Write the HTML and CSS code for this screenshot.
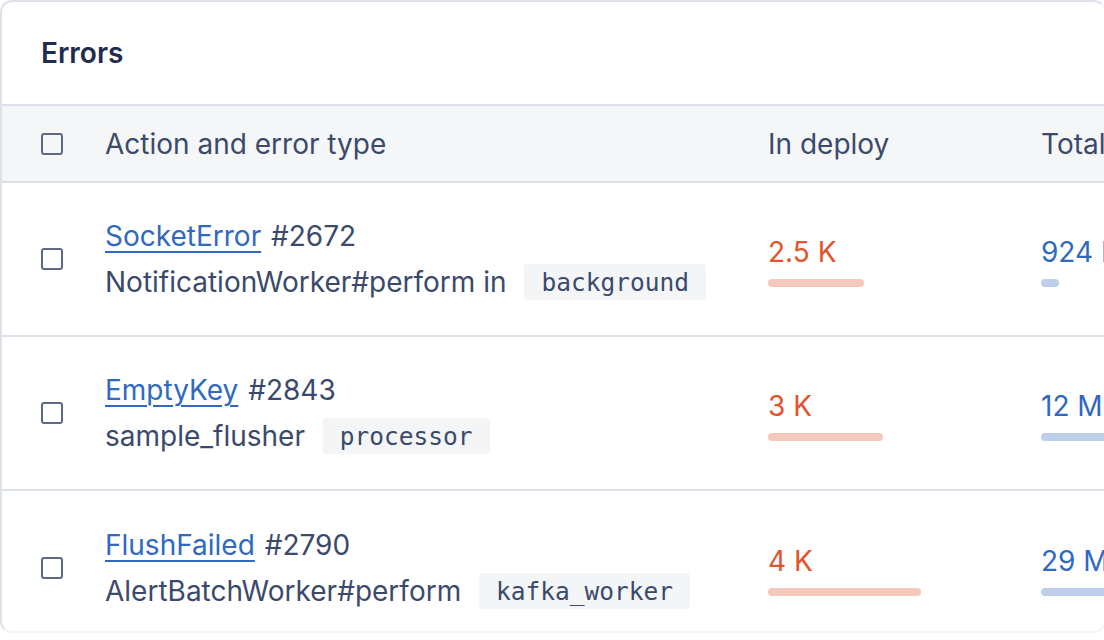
FILE: index.html
```html
<!DOCTYPE html>
<html lang="en">
<head>
<meta charset="utf-8">
<title>Errors</title>
<link rel="stylesheet" href="styles.css">
</head>
<body>
<div class="card">
  <div class="card-title">Errors</div>
  <div class="row head">
    <div class="cell"><span class="check"></span></div>
    <div class="cell">Action and error type</div>
    <div class="cell">In deploy</div>
    <div class="cell">Total</div>
  </div>
  <div class="row">
    <div class="cell"><span class="check"></span></div>
    <div class="cell main">
      <div class="line1"><a class="link" href="#">SocketError</a> #2672</div>
      <div class="line2">NotificationWorker#perform in <span class="tag">background</span></div>
    </div>
    <div class="cell metric deploy">
      <div class="num">2.5 K</div>
      <div class="bar" style="width:96px"></div>
    </div>
    <div class="cell metric total">
      <div class="num">924 K</div>
      <div class="bar" style="width:18px"></div>
    </div>
  </div>
  <div class="row">
    <div class="cell"><span class="check"></span></div>
    <div class="cell main">
      <div class="line1"><a class="link" href="#">EmptyKey</a> #2843</div>
      <div class="line2">sample_flusher <span class="tag">processor</span></div>
    </div>
    <div class="cell metric deploy">
      <div class="num">3 K</div>
      <div class="bar" style="width:115px"></div>
    </div>
    <div class="cell metric total">
      <div class="num">12 M</div>
      <div class="bar" style="width:120px"></div>
    </div>
  </div>
  <div class="row">
    <div class="cell"><span class="check"></span></div>
    <div class="cell main">
      <div class="line1"><a class="link" href="#">FlushFailed</a> #2790</div>
      <div class="line2">AlertBatchWorker#perform <span class="tag">kafka_worker</span></div>
    </div>
    <div class="cell metric deploy">
      <div class="num">4 K</div>
      <div class="bar" style="width:153px"></div>
    </div>
    <div class="cell metric total">
      <div class="num">29 M</div>
      <div class="bar" style="width:140px"></div>
    </div>
  </div>
</div>
</body>
</html>
```

FILE: styles.css
```css
* { box-sizing: border-box; }
html, body { margin: 0; padding: 0; background: #ffffff; }
body {
  font-family: Inter, "Noto Sans", "Liberation Sans", sans-serif;
  color: #3b4a6b;
  width: 1104px;
  height: 640px;
  overflow: hidden;
}
.card {
  width: 1106px;
  height: 633px;
  border: 2px solid #dde1ea;
  border-right-color: #f5f6f9;
  border-bottom-color: #f3f4f7;
  border-radius: 12px;
  overflow: hidden;
  background: #fff;
}
.card-title {
  height: 104px;
  padding-left: 39px;
  display: flex;
  align-items: center;
  font-size: 28px;
  font-weight: 600;
  color: #1f2c4c;
  border-bottom: 2px solid #dde1ea;
}
.row {
  display: grid;
  grid-template-columns: 64px 663px 273px 200px;
  padding-left: 39px;
  height: 154px;
  border-bottom: 2px solid #dde1ea;
  font-size: 28px;
}
.row:last-child { border-bottom: none; }
.row.head {
  height: 77px;
  background: #f5f6f8;
  border-bottom: 2px solid #dde1ea;
}
.cell {
  display: flex;
  align-items: center;
  white-space: nowrap;
}
.check {
  display: block;
  width: 22px;
  height: 22px;
  border: 2.5px solid #5d6a86;
  border-radius: 3px;
}
.main {
  flex-direction: column;
  align-items: flex-start;
  justify-content: center;
}
.line1 { height: 46px; display: flex; align-items: center; white-space: pre; }
.line2 { height: 46px; display: flex; align-items: center; white-space: pre; }
.link {
  color: #2f69c0;
  text-decoration: underline;
  text-decoration-thickness: 2px;
  text-underline-offset: 5px;
  margin-right: 2px;
}
.tag {
  display: inline-flex;
  align-items: center;
  height: 36px;
  padding: 0 17px;
  margin-left: 10px;
  background: #f4f5f7;
  border-radius: 4px;
  font-family: "DejaVu Sans Mono", "Liberation Mono", monospace;
  font-size: 24.5px;
  color: #3b4a6b;
}
.metric {
  flex-direction: column;
  align-items: flex-start;
  justify-content: center;
  padding-top: 6px;
}
.num { height: 30px; line-height: 30px; margin-bottom: 12px; }
.bar { height: 8px; border-radius: 4px; }
.deploy .num { color: #e1542c; }
.deploy .bar { background: #f5c8bc; }
.total .num { color: #2f69c0; }
.total .bar { background: #bdcfea; }
```
